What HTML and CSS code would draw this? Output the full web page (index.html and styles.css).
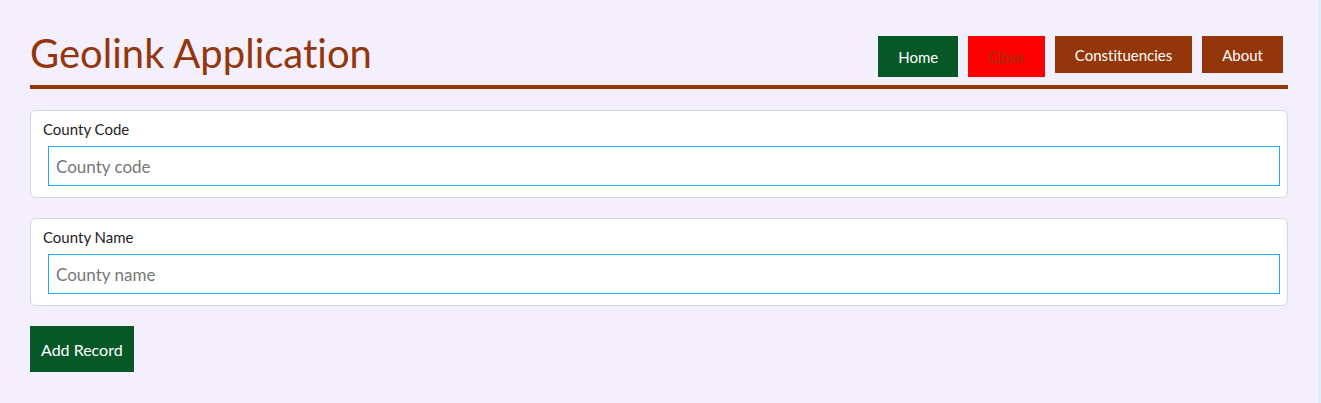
FILE: index.html
```html
<!DOCTYPE html>
<html lang="en">
<head>
<meta charset="utf-8">
<title>Geolink Application</title>
<link rel="stylesheet" href="styles.css">
</head>
<body>
<div class="page">
  <header class="header">
    <h1 class="title">Geolink Application</h1>
    <nav class="nav">
      <button class="btn btn-home">Home</button>
      <button class="btn btn-close">Close</button>
      <a class="link">Constituencies</a>
      <a class="link">About</a>
    </nav>
  </header>
  <form class="form">
    <div class="card">
      <label class="label">County Code</label>
      <input class="input" type="text" placeholder="County code">
    </div>
    <div class="card">
      <label class="label">County Name</label>
      <input class="input" type="text" placeholder="County name">
    </div>
    <button type="button" class="btn-add">Add Record</button>
  </form>
</div>
</body>
</html>
```
FILE: styles.css
```css
html, body {
  margin: 0;
  padding: 0;
  background: #f4effd;
}
body {
  font-family: Lato, "Open Sans", sans-serif;
  font-variant-ligatures: none;
}
.page {
  width: 1321px;
  min-height: 403px;
  box-sizing: border-box;
  padding: 0 30px;
  border-right: 3px solid #dcedfc;
}
.header {
  display: flex;
  justify-content: space-between;
  align-items: flex-start;
  border-bottom: 4px solid #933609;
  height: 85px;
  box-sizing: content-box;
}
.title {
  margin: 29px 0 0 0;
  font-size: 40px;
  font-weight: 400;
  line-height: 48px;
  color: #93360b;
  font-variant-ligatures: none;
}
.nav {
  display: flex;
  gap: 10px;
  margin: 36px 5px 0 0;
  align-items: flex-start;
}
.btn, .link {
  font-family: Lato, sans-serif;
  font-size: 15px;
  border: none;
  padding: 0 20px;
  display: flex;
  align-items: center;
  justify-content: center;
  box-sizing: border-box;
}
.btn {
  height: 41px;
  padding-top: 1px;
}
.btn-home {
  background: #065927;
  color: #ffffff;
}
.btn-close {
  background: #ff0000;
  color: #94360a;
}
.link {
  height: 37px;
  background: #933609;
  color: #ffffff;
  text-decoration: none;
}
.form {
  display: flex;
  flex-direction: column;
  align-items: flex-start;
  gap: 20px;
  padding-top: 21px;
}
.card {
  align-self: stretch;
  background: #ffffff;
  border: 1px solid #d6d5e1;
  border-radius: 6px;
  padding: 9px 7px 11px 12px;
  display: flex;
  flex-direction: column;
}
.label {
  font-size: 15px;
  line-height: 19px;
  color: #1f1f1f;
}
.input {
  margin: 7px 0 0 5px;
  height: 40px;
  box-sizing: border-box;
  border: 1px solid #1cb1f2;
  border-radius: 0;
  padding: 0 7px;
  font-family: Lato, sans-serif;
  font-size: 17px;
  color: #333333;
  outline: none;
}
.input::placeholder {
  color: #777777;
}
.btn-add {
  height: 46px;
  padding: 0 11px;
  background: #065927;
  color: #ffffff;
  border: none;
  font-family: Lato, sans-serif;
  font-size: 16px;
}
```
